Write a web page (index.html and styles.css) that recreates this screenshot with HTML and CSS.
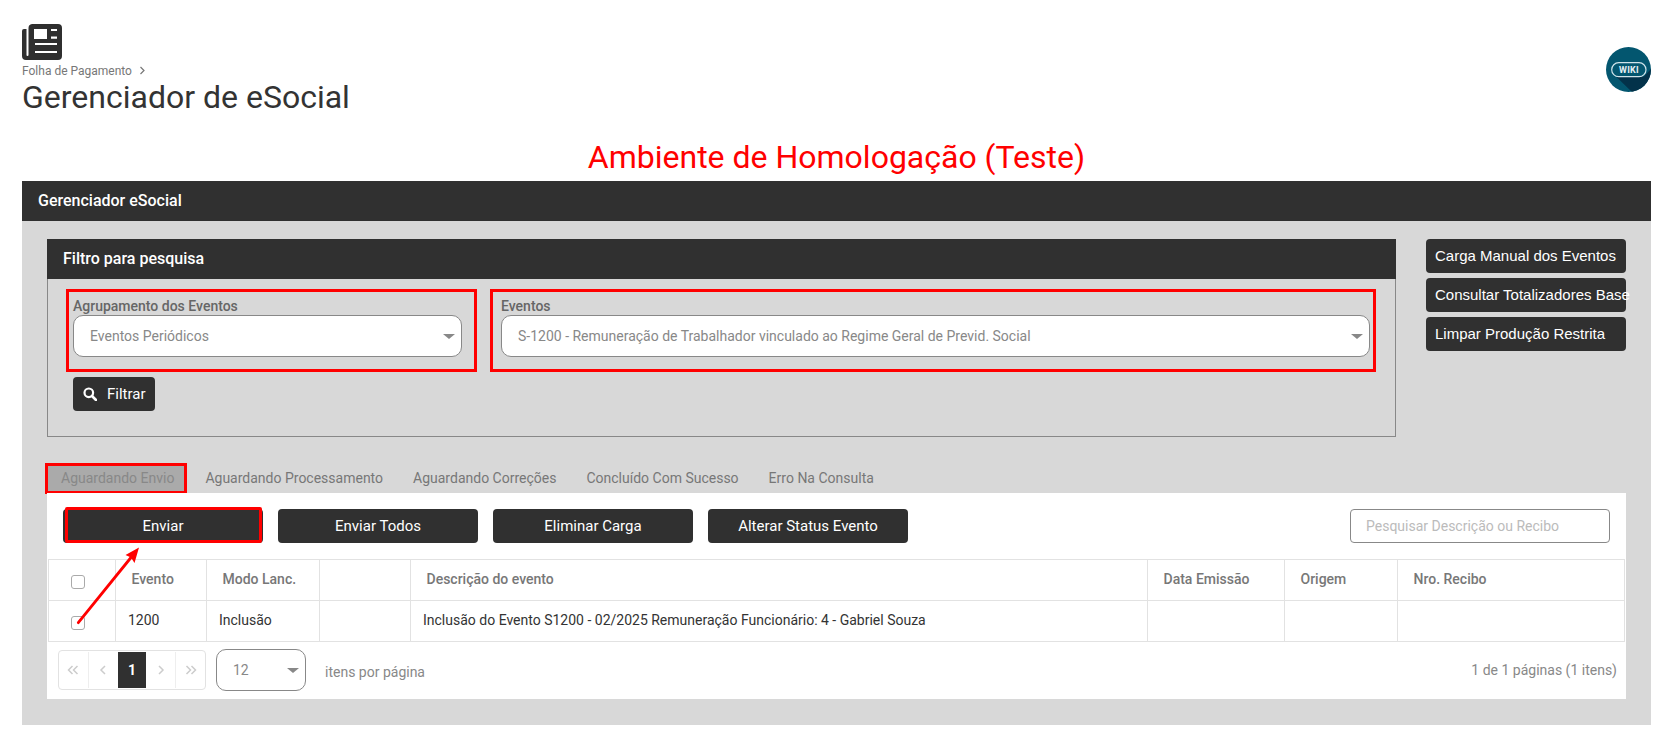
FILE: index.html
```html
<!DOCTYPE html>
<html lang="pt-BR">
<head>
<meta charset="utf-8">
<title>Gerenciador de eSocial</title>
<link rel="stylesheet" href="styles.css">
</head>
<body>
<div class="page">
  <header class="top">
    <div class="top-left">
      <svg class="news" viewBox="0 0 40 36" aria-hidden="true"><path fill-rule="evenodd" fill="#2f2f2f" d="M10 0h26a4 4 0 0 1 4 4v28a4 4 0 0 1-4 4H4a4 4 0 0 1-4-4V7a2 2 0 0 1 2-2h2.500v26a1 1 0 0 0 2 0V4a4 4 0 0 1 3.500-4zM12 5v10h13V5zM29 5v2h6V5zM29 12.500v2.200h6V12.500zM13 19v2h22V19zM13 27v2h22V27z"/></svg>
      <div class="crumb">Folha de Pagamento <svg class="crumb-sep" viewBox="0 0 7 9" aria-hidden="true"><path d="M1.500 1l3.500 3.500L1.500 8" fill="none" stroke="#777" stroke-width="1.200"/></svg></div>
      <h1 class="title">Gerenciador de eSocial</h1>
    </div>
    <svg class="wiki" viewBox="0 0 45 45" aria-label="Wiki">
      <defs><clipPath id="wc"><circle cx="22.500" cy="22.500" r="22.500"/></clipPath></defs>
      <circle cx="22.500" cy="22.500" r="22.500" fill="#03566f"/>
      <path clip-path="url(#wc)" d="M10 29.500L38 29.500L45 22L45 45L26 45z" fill="#03324a"/>
      <rect x="5.700" y="15.700" width="34.300" height="14" rx="7" fill="#03566f" stroke="#cfe3ea" stroke-width="1.200"/>
      <text x="23" y="26.300" class="wiki-text" text-anchor="middle">WIKI</text>
    </svg>
  </header>

  <div class="env">Ambiente de Homologação (Teste)</div>

  <section class="panel">
    <div class="bar panel-bar">Gerenciador eSocial</div>
    <div class="panel-body">
      <div class="upper">
        <div class="filter">
          <div class="bar filter-bar">Filtro para pesquisa</div>
          <div class="filter-body">
            <div class="fields">
              <div class="field field-a">
                <label class="field-label">Agrupamento dos Eventos</label>
                <div class="select">Eventos Periódicos<span class="caret"></span></div>
              </div>
              <div class="field field-b">
                <label class="field-label">Eventos</label>
                <div class="select">S-1200 - Remuneração de Trabalhador vinculado ao Regime Geral de Previd. Social<span class="caret"></span></div>
              </div>
            </div>
            <button class="btn btn-filter" type="button">
              <svg class="search-icon" viewBox="0 0 14 14" aria-hidden="true"><circle cx="5.800" cy="5.800" r="4.300" fill="none" stroke="#fff" stroke-width="2.200"/><path d="M9 9l4 4" stroke="#fff" stroke-width="2.600" stroke-linecap="round"/></svg>
              Filtrar
            </button>
          </div>
        </div>
        <div class="side">
          <button class="btn btn-side" type="button">Carga Manual dos Eventos</button>
          <button class="btn btn-side" type="button">Consultar Totalizadores Base</button>
          <button class="btn btn-side" type="button">Limpar Produção Restrita</button>
        </div>
      </div>

      <nav class="tabs">
        <span class="tab tab-active">Aguardando Envio</span>
        <span class="tab">Aguardando Processamento</span>
        <span class="tab">Aguardando Correções</span>
        <span class="tab">Concluído Com Sucesso</span>
        <span class="tab">Erro Na Consulta</span>
      </nav>

      <div class="tab-panel">
        <div class="actions">
          <button class="btn btn-action btn-marked" type="button">Enviar</button>
          <button class="btn btn-action" type="button">Enviar Todos</button>
          <button class="btn btn-action" type="button">Eliminar Carga</button>
          <button class="btn btn-action" type="button">Alterar Status Evento</button>
          <div class="search">Pesquisar Descrição ou Recibo</div>
        </div>

        <table class="grid">
          <colgroup>
            <col class="c-check"><col class="c-event"><col class="c-mode"><col class="c-blank"><col class="c-desc"><col class="c-date"><col class="c-orig"><col class="c-rec">
          </colgroup>
          <thead>
            <tr>
              <th class="cell-check"><span class="check"></span></th>
              <th>Evento</th><th>Modo Lanc.</th><th></th><th>Descrição do evento</th><th>Data Emissão</th><th>Origem</th><th>Nro. Recibo</th>
            </tr>
          </thead>
          <tbody>
            <tr>
              <td class="cell-check"><span class="check"></span></td>
              <td>1200</td><td>Inclusão</td><td></td><td>Inclusão do Evento S1200 - 02/2025 Remuneração Funcionário: 4 - Gabriel Souza</td><td></td><td></td><td></td>
            </tr>
          </tbody>
        </table>

        <div class="foot">
          <div class="pager">
            <span class="pg pg-off"><svg class="chev" viewBox="0 0 12 10" aria-hidden="true"><path d="M5.500 1L1.500 5l4 4M10.500 1l-4 4 4 4"/></svg></span>
            <span class="pg pg-off"><svg class="chev" viewBox="0 0 12 10" aria-hidden="true"><path d="M8 1L4 5l4 4"/></svg></span>
            <span class="pg pg-on">1</span>
            <span class="pg pg-off pg-after"><svg class="chev" viewBox="0 0 12 10" aria-hidden="true"><path d="M4 1l4 4-4 4"/></svg></span>
            <span class="pg pg-off"><svg class="chev" viewBox="0 0 12 10" aria-hidden="true"><path d="M1.500 1l4 4-4 4M6.500 1l4 4-4 4"/></svg></span>
          </div>
          <div class="select select-small">12<span class="caret"></span></div>
          <span class="per-page">itens por página</span>
          <span class="count">1 de 1 páginas (1 itens)</span>
        </div>

        <svg class="arrow" viewBox="0 0 70 84" aria-hidden="true">
          <path d="M4.300 75.700L57 10.500" stroke="#f00" stroke-width="2.800" stroke-linecap="round"/>
          <path d="M65 0.500L51.500 8L57 10.500L60.500 16z" fill="#f00"/>
        </svg>
      </div>
    </div>
  </section>
</div>
</body>
</html>
```
FILE: styles.css
```css
* { box-sizing: border-box; }
html, body { margin: 0; padding: 0; background: #fff; }
body { font-family: Roboto, "Liberation Sans", sans-serif; font-size: 14px; color: #333; }
.page { padding: 0 20px 11px 22px; }

.top { display: flex; justify-content: space-between; align-items: flex-start; padding-top: 24px; }
.news { display: block; width: 40px; height: 36px; }
.crumb { margin-top: 4px; font-size: 12px; line-height: 14px; color: #777; }
.crumb-sep { width: 7px; height: 9px; margin-left: 4px; }
.title { margin: 0; font-size: 32px; font-weight: 400; line-height: 38px; color: #333; }
.wiki { display: block; width: 45px; height: 45px; margin-top: 23px; }
.wiki-text { font-family: Roboto, sans-serif; font-size: 9px; font-weight: 700; letter-spacing: 0.3px; fill: #e6f0f4; }

.env { margin-top: 21px; height: 44px; font-size: 32px; line-height: 40px; color: #f00; text-align: center; }

.bar { display: flex; align-items: center; background: #303030; color: #fff; font-weight: 500; }
.panel-bar { height: 40px; padding: 0 0 2px 16px; font-size: 16px; }
.panel-body { background: #d8d8d8; padding: 18px 25px 26px; }

.upper { display: flex; gap: 30px; }
.filter { width: 1349px; }
.filter-bar { height: 40px; padding: 0 0 2px 16px; font-size: 16px; }
.filter-body { height: 158px; border: 1px solid #888; border-top: 0; padding: 10px 18px 0; }
.fields { display: flex; gap: 13px; }
.field { height: 83px; border: 3px solid #f00; }
.field-a { width: 411px; padding: 5px 12px 0 4px; }
.field-b { width: 886px; padding: 5px 3px 0 8px; }
.field-label { display: block; font-size: 14px; font-weight: 500; line-height: 18px; color: #666; }
.select { position: relative; height: 42px; background: #fff; border: 1px solid #888; border-radius: 10px; padding-left: 16px; line-height: 40px; font-size: 14px; color: #888; }
.caret { position: absolute; right: 6px; top: 18px; width: 0; height: 0; border-left: 6px solid transparent; border-right: 6px solid transparent; border-top: 5.500px solid #888; }

.btn { display: block; border: 0; background: #303030; color: #fff; border-radius: 4px; font-family: Roboto, "Liberation Sans", sans-serif; font-size: 15px; height: 34px; padding: 0; cursor: pointer; }
.btn-filter { display: flex; align-items: center; gap: 10px; margin: 5px 0 0 7px; width: 82px; padding-left: 10px; }
.search-icon { width: 14px; height: 14px; }
.side { display: flex; flex-direction: column; gap: 5px; width: 200px; }
.btn-side { width: 200px; padding: 0 0 2px 9px; text-align: left; white-space: nowrap; font-family: "Liberation Sans", sans-serif; }

.tabs { display: flex; height: 30px; margin: 26px 0 0 -2px; }
.tab { padding: 0 15px; line-height: 30px; font-size: 14px; color: #777; }
.tab-active { height: 31px; margin-right: 3px; padding: 0 10px 0 13px; background: #aaa; border: 3px solid #f00; line-height: 25px; color: #888; }

.tab-panel { position: relative; background: #fff; height: 206px; }
.actions { display: flex; gap: 15px; height: 66px; padding: 16px 16px 0; }
.btn-action { position: relative; width: 200px; text-align: center; }
.btn-marked::after { content: ""; position: absolute; top: -2px; left: 2px; right: 1px; bottom: 0; border: 3px solid #f00; border-radius: 2px; }
.search { margin-left: auto; width: 260px; height: 34px; border: 1px solid #888; border-radius: 4px; padding-left: 15px; line-height: 32px; font-size: 14px; color: #bbb; }

.grid { border-collapse: collapse; table-layout: fixed; width: 1577px; margin-left: 1px; }
.grid th, .grid td { height: 41px; border: 1px solid #e2e2e2; padding: 0 12px 2px; text-align: left; font-size: 14px; }
.grid th { font-weight: 500; color: #777; padding-left: 15.500px; }
.grid td { font-weight: 400; color: #333; }
.grid .cell-check { padding: 0 8px 0 0; text-align: center; }
.c-check { width: 67px; }
.c-event { width: 91px; }
.c-mode { width: 113px; }
.c-blank { width: 91px; }
.c-desc { width: 737px; }
.c-date { width: 137px; }
.c-orig { width: 113px; }
.check { display: inline-block; width: 14px; height: 14px; margin-top: 2px; vertical-align: middle; border: 1px solid #aaa; border-radius: 3px; background: #fff; }

.foot { display: flex; align-items: center; height: 57px; padding: 0 9px 2px 11px; }
.pager { display: flex; width: 148px; height: 40px; border: 1px solid #e2e2e2; border-radius: 4px; padding: 1px 0; }
.pg { flex: 1; display: flex; align-items: center; justify-content: center; }
.pg-off + .pg-off { border-left: 1px solid #eee; }
.pg-after + .pg-off { border-left: 1px solid #eee; }
.pg-on { background: #303030; color: #fff; font-size: 14px; font-weight: 700; }
.chev { width: 12px; height: 10px; fill: none; stroke: #ccc; stroke-width: 1.500; }
.select-small { width: 90px; height: 42px; margin-left: 10px; padding-left: 16px; color: #888; }
.per-page { margin-left: 19px; padding-top: 4px; color: #888; }
.count { margin-left: auto; color: #888; }

.arrow { position: absolute; left: 27px; top: 54px; width: 70px; height: 84px; }
```
